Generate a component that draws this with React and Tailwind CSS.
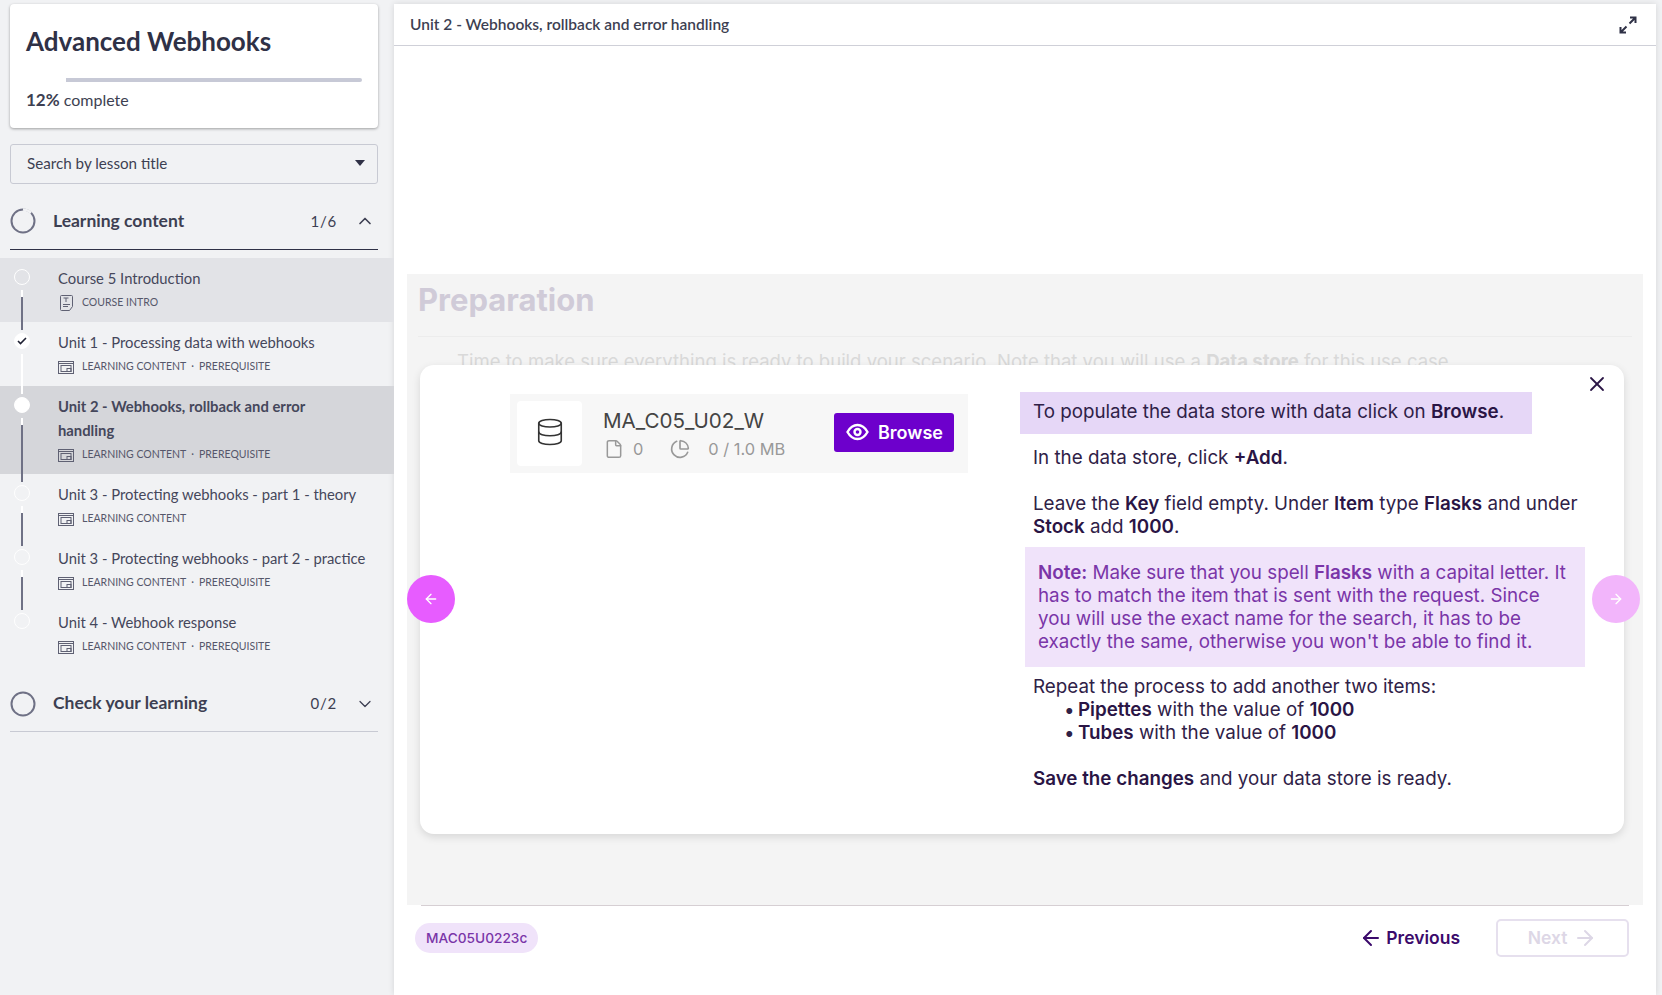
import { ArrowLeft, ArrowRight, ChevronDown, ChevronUp, ChartPie, Database, File, X } from "lucide-react";

const lessons = [
  { title: "Course 5 Introduction", tag: "COURSE INTRO", intro: true, bg: "bg-[#e2e3e7]" },
  { title: "Unit 1 - Processing data with webhooks", tag: "LEARNING CONTENT", pre: true, done: true, whiteLine: true },
  { title: "Unit 2 - Webhooks, rollback and error\nhandling", tag: "LEARNING CONTENT", pre: true, active: true, bg: "bg-[#d5d6da]" },
  { title: "Unit 3 - Protecting webhooks - part 1 - theory", tag: "LEARNING CONTENT" },
  { title: "Unit 3 - Protecting webhooks - part 2 - practice", tag: "LEARNING CONTENT", pre: true },
  { title: "Unit 4 - Webhook response", tag: "LEARNING CONTENT", pre: true, last: true },
];

function SlideIcon() {
  return (
    <svg width="16" height="13" viewBox="0 0 16 13" fill="none" stroke="#5f6173" strokeWidth="1" className="shrink-0">
      <rect x="0.5" y="0.5" width="15" height="12" />
      <path d="M0.5 2.5h15" />
      <rect x="3" y="4.5" width="10" height="6" />
      <rect x="9" y="7.5" width="4" height="3" />
    </svg>
  );
}

function DocIcon() {
  return (
    <svg width="13" height="16" viewBox="0 0 13 16" fill="none" stroke="#5f6173" strokeWidth="1" className="shrink-0">
      <path d="M0.5 1.5a1 1 0 0 1 1-1h10a1 1 0 0 1 1 1v10l-3 4h-8a1 1 0 0 1-1-1z" />
      <path d="M3.5 3h5M6 3v4M3 9.5h7M3 11.5h5" />
    </svg>
  );
}

function ExpandIcon() {
  return (
    <svg width="18" height="18" viewBox="0 0 18 18" fill="none" stroke="#2f3146" strokeWidth="2">
      <path d="M10.5 7.5 16 2M11 1.5h5.5V7" />
      <path d="M7.5 10.5 2 16M1.5 11v5.5H7" />
    </svg>
  );
}

function EyeIcon() {
  return (
    <svg width="23" height="18" viewBox="0 0 23 18" fill="none" stroke="#fff" strokeWidth="2.4">
      <path d="M1.5 9C4 4.5 7.5 2 11.5 2s7.5 2.5 10 7c-2.500 4.500-6 7-10 7s-7.500-2.500-10-7z" />
      <circle cx="11.500" cy="9" r="3" />
    </svg>
  );
}

function Ring({ partial }) {
  return (
    <svg width="26" height="26" viewBox="0 0 26 26" fill="none" className="shrink-0">
      <circle cx="13" cy="13" r="11.5" stroke="#6f7185" strokeWidth="2" />
      {partial && <path d="M13 1.5a11.5 11.5 0 0 1 8 3.3" stroke="#f1f2f4" strokeWidth="2.5" />}
    </svg>
  );
}

function LessonRow({ lesson }) {
  return (
    <div className={`relative flex pt-2 pb-2 pl-[58px] pr-3 ${lesson.bg || ""}`}>
      <div
        className={`absolute left-[14px] top-[11px] w-4 h-4 rounded-full border flex items-center justify-center ${
          lesson.done || lesson.active ? "bg-white border-white" : "border-white"
        }`}
      >
        {lesson.done && (
          <svg width="10" height="8" viewBox="0 0 10 8" fill="none" stroke="#1f2133" strokeWidth="1.6">
            <path d="M1 4l2.5 2.5L9 1" />
          </svg>
        )}
      </div>
      {!lesson.last && (
        <div
          className={`absolute z-10 left-[21px] top-[32px] bottom-[-8px] w-[2px] border-t-[7px] border-white ${
            lesson.whiteLine ? "bg-white" : "bg-[#6f7185]"
          }`}
        />
      )}
      <div className="min-w-0">
        <div className={`text-[14.8px] leading-6 whitespace-pre-line text-[#45475b] ${lesson.active ? "font-bold" : ""}`}>{lesson.title}</div>
        <div className="h-6 pt-[2px] flex items-center text-[#55576a] text-[10.5px]">
          <span className="w-[24px] flex">{lesson.intro ? <span className="pl-[2px]"><DocIcon /></span> : <SlideIcon />}</span>
          <span>{lesson.tag}</span>
          {lesson.pre && <span className="ml-[5px]">·</span>}
          {lesson.pre && <span className="ml-[5px]">PREREQUISITE</span>}
        </div>
      </div>
    </div>
  );
}

function Sidebar() {
  return (
    <aside className="w-[394px] shrink-0 pt-1">
      <div className="ml-[10px] mr-[16px] h-[124px] bg-white rounded-[4px] shadow-[0_1px_3px_rgba(0,0,0,0.35)] px-[16px] pt-[17px]">
        <h1 className="text-[26px] leading-10 font-bold text-[#2f3146]">Advanced Webhooks</h1>
        <div className="mt-[17px] flex h-[4px]">
          <div className="w-[40px] bg-white" />
          <div className="flex-1 bg-[#c7c9d6] rounded-r-sm" />
        </div>
        <div className="mt-[8px] text-[16px] leading-5 text-[#3d3f52]">
          <span className="font-bold text-[17px]">12%</span> complete
        </div>
      </div>

      <div className="ml-[10px] mr-[16px] mt-[16px] h-[40px] pb-[2px] border border-[#c8cad3] rounded-[3px] flex items-center justify-between pl-[16px] pr-[12px] text-[15.2px] text-[#3d3f52]">
        <span>Search by lesson title</span>
        <span className="w-0 h-0 border-x-[5px] border-x-transparent border-t-[6px] border-t-[#2f3146]" />
      </div>

      <div className="ml-[10px] mr-[16px] mt-[12px] h-[54px] pb-[3px] border-b border-[#2f3146] flex items-center text-[#3d3f52]">
        <Ring partial />
        <span className="ml-[17px] text-[17.5px] font-bold flex-1">Learning content</span>
        <span className="text-[15px] tracking-wider">1/6</span>
        <ChevronUp size={20} strokeWidth={2} className="ml-[18px] mr-[3px]" />
      </div>

      <div className="pt-2">
        {lessons.map((l) => (
          <LessonRow key={l.title} lesson={l} />
        ))}
      </div>

      <div className="ml-[10px] mr-[16px] h-[66px] pt-[14px] pb-[4px] border-b border-[#c8cad3] flex items-center text-[#3d3f52]">
        <Ring />
        <span className="ml-[17px] text-[17.5px] font-bold flex-1">Check your learning</span>
        <span className="text-[15px] tracking-wider">0/2</span>
        <ChevronDown size={20} strokeWidth={1.5} className="ml-[18px] mr-[3px]" />
      </div>
    </aside>
  );
}

function DataStoreCard() {
  return (
    <div className="w-[458px] h-[79px] bg-[#f7f7f7] flex items-center pl-[7px]">
      <div className="w-[65px] h-[65px] pb-[3px] bg-white rounded-[4px] flex items-center justify-center">
        <Database size={30} strokeWidth={1.3} color="#333" />
      </div>
      <div className="ml-[21px] w-[231px]">
        <div className="text-[20.6px] leading-6 text-[#444]">MA_C05_U02_W</div>
        <div className="mt-[6px] flex items-center text-[16.4px] leading-5 text-[#999]">
          <File size={20} strokeWidth={1.8} className="ml-[1px]" />
          <span className="ml-[9px]">0</span>
          <ChartPie size={20} strokeWidth={2} className="ml-[27px]" />
          <span className="ml-[18px]">0 / 1.0 MB</span>
        </div>
      </div>
      <div className="w-[120px] h-[39px] mb-[3px] bg-[#6d00cc] rounded-[3px] flex items-center pl-[12px] gap-[9px] text-white text-[18px] font-semibold">
        <EyeIcon />
        <span>Browse</span>
      </div>
    </div>
  );
}

function Instructions() {
  const b = "font-semibold text-[#2a1545]";
  return (
    <div className="pt-[27px] w-[570px] text-[18.8px] leading-[23px] text-[#2f2147]">
      <div className="w-[512px] h-[42px] bg-[#e6d7f7] flex items-center px-[13px] pb-[4px]">
        <span>
          To populate the data store with data click on <b className={b}>Browse</b>.
        </span>
      </div>
      <p className="ml-[13px] mt-[12px]">
        In the data store, click <b className={b}>+Add</b>.
      </p>
      <p className="ml-[13px] mt-[23px]">
        Leave the <b className={b}>Key</b> field empty. Under <b className={b}>Item</b> type <b className={b}>Flasks</b> and under <b className={b}>Stock</b> add <b className={b}>1000</b>.
      </p>
      <div className="ml-[5px] mt-[9px] w-[560px] h-[120px] bg-[#f0e3fa] pl-[13px] pr-[8px] pt-[14px] text-[#7a35a8]">
        <b className="font-semibold">Note:</b> Make sure that you spell <b className="font-semibold">Flasks</b> with a capital letter. It has to match the item that is sent with the request. Since you will use the exact name for the search, it has to be exactly the same, otherwise you won't be able to find it.
      </div>
      <p className="ml-[13px] mt-[8px]">Repeat the process to add another two items:</p>
      <ul className="ml-[44px]">
        <li className="flex">
          <span className="w-[14px]">•</span>
          <span>
            <b className={b}>Pipettes</b> with the value of <b className={b}>1000</b>
          </span>
        </li>
        <li className="flex">
          <span className="w-[14px]">•</span>
          <span>
            <b className={b}>Tubes</b> with the value of <b className={b}>1000</b>
          </span>
        </li>
      </ul>
      <p className="ml-[13px] mt-[23px]">
        <b className={b}>Save the changes</b> and your data store is ready.
      </p>
    </div>
  );
}

function Main() {
  return (
    <main
      className="flex-1 mt-1 mr-[6px] bg-white flex flex-col shadow-[0_0_6px_rgba(0,0,0,0.12)]"
      style={{ fontFamily: "Inter, sans-serif" }}
    >
      <header
        className="h-[42px] shrink-0 border-b border-[#cfd0d8] flex items-center justify-between pl-[16px] pr-[19px] text-[15.5px] font-semibold text-[#3d3f52]"
        style={{ fontFamily: "Lato, sans-serif" }}
      >
        <span>Unit 2 - Webhooks, rollback and error handling</span>
        <ExpandIcon />
      </header>

      <div className="h-[228px] shrink-0" />

      <section className="relative mx-[13px] h-[631px] shrink-0 bg-[#f4f4f4] overflow-hidden">
        <h2 className="pl-[11px] pt-[6px] text-[31px] leading-10 font-bold text-[#d0cbd8]">Preparation</h2>
        <div className="mx-[11px] mt-[16px] border-t border-[#ececec]" />
        <p className="pl-[50px] mt-[12px] text-[18.55px] leading-6 text-[#d9d9d9]">
          Time to make sure everything is ready to build your scenario. Note that you will use a <b>Data store</b> for this use case.
        </p>

        {/* popup over the lesson text */}
        <div className="absolute left-[13px] top-[91px] w-[1204px] h-[469px] bg-white rounded-[14px] shadow-[0_3px_8px_rgba(0,0,0,0.12)] flex">
          <div className="w-[600px] pl-[90px] pt-[29px]">
            <DataStoreCard />
          </div>
          <Instructions />
          <X size={24} strokeWidth={1.8} color="#2a1545" className="absolute top-[7px] right-[15px]" />
        </div>

        <div className="absolute left-0 top-[301px] w-12 h-12 rounded-full bg-[#e75cff] flex items-center justify-center">
          <ArrowLeft size={16} color="#fff" strokeWidth={2} />
        </div>
        <div className="absolute right-[3px] top-[301px] w-12 h-12 rounded-full bg-[#f2b5fb] flex items-center justify-center">
          <ArrowRight size={16} color="#fff" strokeWidth={2} />
        </div>
      </section>

      <footer className="mx-[13px] relative flex-1">
        <div className="mx-[14px] border-t border-[#d6cfd3]" />
        <div className="pl-[8px] pr-[14px] pt-[13px] flex items-start justify-between">
          <span className="mt-[4px] h-[30px] px-[11px] rounded-full bg-[#f0e3fa] text-[13.7px] font-medium text-[#7a35a8] flex items-center">MAC05U0223c</span>
          <div className="flex items-center">
            <span className="flex items-center gap-[3px] text-[#3b0a6b] font-semibold text-[17.5px]">
              <ArrowLeft size={24} strokeWidth={2} />
              Previous
            </span>
            <span className="ml-[36px] w-[133px] h-[38px] border-2 border-[#e6e0ee] rounded-[5px] flex items-center justify-center gap-[6px] text-[#ddd7e6] font-semibold text-[17.500px]">
              Next
              <ArrowRight size={24} strokeWidth={2} />
            </span>
          </div>
        </div>
      </footer>
    </main>
  );
}

export default function App() {
  return (
    <div className="h-screen overflow-hidden flex bg-[#f1f2f4]" style={{ fontFamily: "Lato, sans-serif" }}>
      <Sidebar />
      <Main />
    </div>
  );
}
